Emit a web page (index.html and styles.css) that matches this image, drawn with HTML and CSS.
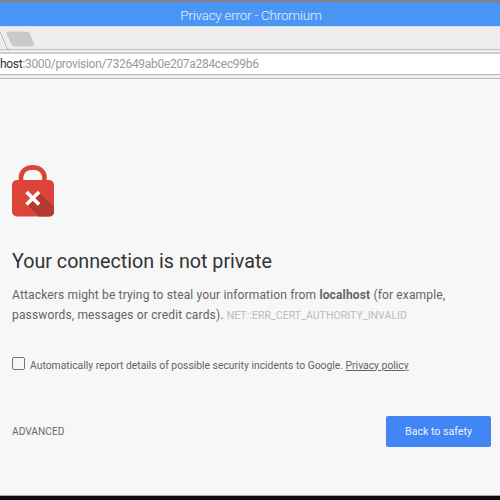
FILE: index.html
```
<!DOCTYPE html>
<html lang="en">
<head>
    <meta charset="UTF-8">
    <meta name="viewport" content="width=device-width, initial-scale=1.0">
    <title>Privacy error</title>
    <link rel="stylesheet" href="styles.css">
</head>
<body>
    <div class="window">
        <!-- Browser chrome -->
        <header class="title-bar"><span>Privacy error - Chromium</span></header>
        <div class="tab-strip">
            <svg width="40" height="22" viewBox="0 0 40 22">
                <path d="M0 3.5 L7 20" fill="none" stroke="#fafafa" stroke-width="2.4"/>
                <path d="M0 3.5 L7 20 Q7.6 21.5 9.5 21.5" fill="none" stroke="#aaa"/>
                <path d="M8 4 H27 Q29 4 29.800 6 L33.5 16 Q34 18 32 18 H14.5 Q12.500 18 11.700 16 L7 6 Q6.500 4 8 4 Z" fill="#c9c9c9" stroke="#bdbdbd" stroke-width=".5"/>
            </svg>
        </div>
        <div class="toolbar">
            <div class="address-bar"><span class="url"><span class="host">host</span>:3000/provision/732649ab0e207a284cec99b6</span></div>
        </div>

        <!-- Warning page -->
        <main class="interstitial">
            <svg class="lock-icon" width="42" height="52" viewBox="0 0 42 52">
                <path d="M9 18 V12.500 C9 -1 32.500 -1 32.500 12.500 V18" fill="none" stroke="#db4437" stroke-width="4.600"/>
                <rect y="15" width="42" height="36.500" rx="5" fill="#db4437"/>
                <path d="M26.500 27 L42 42 V46.500 Q42 51.500 37 51.500 H27 L14.500 39 Z" fill="#b23a30"/>
                <path d="M14.500 26.900 L27.100 39.500 M27.100 26.900 L14.500 39.500" stroke="#fff" stroke-width="3.600"/>
            </svg>
            <h1>Your connection is not private</h1>
            <p class="message">
                <span class="line">Attackers might be trying to steal your information from <strong>localhost</strong> (for example,</span><br>
                <span class="line">passwords, messages or credit cards).</span>
                <span class="error-code">NET::ERR_CERT_AUTHORITY_INVALID</span>
            </p>
            <div class="report">
                <input type="checkbox" id="optIn">
                <label for="optIn">Automatically report details of possible security incidents to Google. <a href="#">Privacy policy</a></label>
            </div>
            <div class="actions">
                <a class="details-link" href="#">ADVANCED</a>
                <button class="primary-btn">Back to safety</button>
            </div>
        </main>
    </div>
</body>
</html>
```
FILE: styles.css
```
* {
    box-sizing: border-box;
}

body {
    margin: 0;
    height: 500px;
    padding: 2px 0 4px;
    overflow: hidden;
    font-family: Roboto, sans-serif;
    background: linear-gradient(#8c7f83 0 50%, #0b0b10 50%);
}

.window {
    display: flex;
    flex-direction: column;
    height: 494px;
    background: #f7f7f7;
    border-bottom: 1px solid #a9a8ad;
}

/* Browser chrome */
.title-bar {
    height: 24px;
    padding-left: 2px;
    background: #4a96f5;
    color: #e6f1ff;
    font-size: 13.5px;
    font-weight: 300;
    letter-spacing: -0.25px;
    line-height: 27px;
    text-align: center;
}

.tab-strip {
    height: 24px;
    padding-top: 1px;
    background: #ededed;
    border-top: 1px solid #d5e2f3;
    border-bottom: 1px solid #c2c2c2;
}

.tab-strip svg {
    display: block;
}

.toolbar {
    height: 29px;
    padding: 2px 0 3px;
    background: #eee;
    border-bottom: 1px solid #b8b8b8;
}

.address-bar {
    height: 23px;
    background: #fff;
    border-top: 2px solid #d0d0cf;
    border-bottom: 1px solid #b4b4b4;
    color: #999;
    font-size: 12px;
    letter-spacing: -0.3px;
    line-height: 20px;
}

.host {
    color: #333;
}

/* Warning page */
.interstitial {
    padding: 86px 9px 0 12px;
    color: #646464;
}

.lock-icon {
    display: block;
}

h1 {
    margin: 32px 0 0;
    color: #333;
    font-size: 19.7px;
    font-weight: 400;
    line-height: 26px;
}

.message {
    margin: 10px 0 0;
    font-size: 12px;
    letter-spacing: 0.15px;
    line-height: 20px;
    white-space: nowrap;
}

.error-code {
    color: #bbb;
    font-size: 10.5px;
    letter-spacing: 0.06px;
}

.report {
    display: flex;
    align-items: center;
    height: 16px;
    margin-top: 31px;
    font-size: 10.35px;
    white-space: nowrap;
}

.report input {
    appearance: none;
    width: 13px;
    height: 13px;
    margin: 0 5px 3px 0;
    border: 1px solid #777;
    border-radius: 2px;
}

.report a {
    color: inherit;
}

.actions {
    display: flex;
    align-items: center;
    justify-content: space-between;
    margin-top: 43px;
}

.details-link {
    color: #696969;
    font-size: 10.2px;
    text-decoration: none;
}

.primary-btn {
    width: 105px;
    height: 31px;
    padding: 0;
    background: #4285f4;
    border: 0;
    border-radius: 2px;
    color: #eef4ff;
    font-family: inherit;
    font-size: 10.6px;
}
```
